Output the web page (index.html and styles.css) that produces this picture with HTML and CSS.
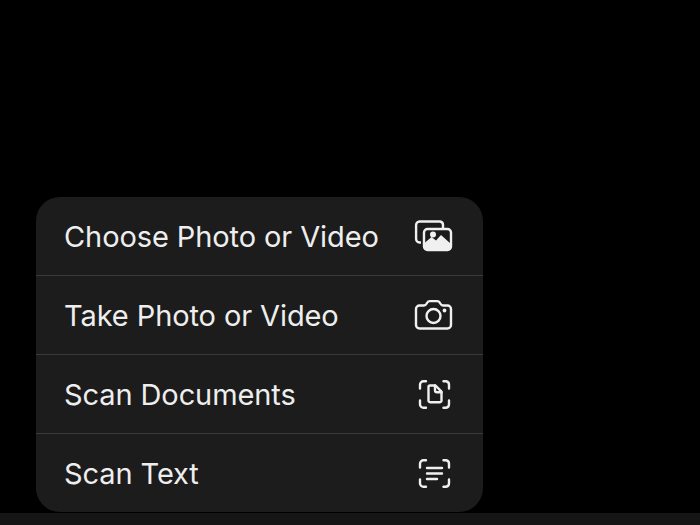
FILE: index.html
```html
<!DOCTYPE html>
<html lang="en">
<head>
<meta charset="utf-8">
<title>Attach menu</title>
<link rel="stylesheet" href="styles.css">
</head>
<body>
<main class="stage">
  <ul class="menu">
    <li class="item"><span class="label">Choose Photo or Video</span>
      <svg class="icon" viewBox="0 0 40 32" width="40" height="32" fill="none" stroke="#f0f0f0" stroke-width="2.4" stroke-linejoin="round">
        <path d="M8 22.500H6.500a3.500 3.500 0 0 1-3.400-3.500V5a3.500 3.500 0 0 1 3.400-3.500h20.500A3.500 3.500 0 0 1 30 5v3"/>
        <rect x="11" y="9" width="27" height="21" rx="3.500"/>
        <path d="M11.500 27v-4l7-6 4.500 3.500 5-5.500 10 9v3.500a2.500 2.500 0 0 1-2.500 2.500h-22a2.500 2.500 0 0 1-2-3z" fill="#f0f0f0" stroke="none"/>
        <circle cx="20" cy="14.500" r="3" fill="#f0f0f0" stroke="none"/>
      </svg>
    </li>
    <li class="item"><span class="label">Take Photo or Video</span>
      <svg class="icon" viewBox="0 0 40 32" width="40" height="32" fill="none" stroke="#f0f0f0" stroke-width="2.4" stroke-linejoin="round">
        <path d="M6.500 6.500h4.500c1.300 0 1.900-.6 2.500-1.700C14.300 3.200 15 2.100 16.500 2.100h8c1.500 0 2.200 1.100 3 2.700.6 1.100 1.200 1.700 2.500 1.700h4.500a3.500 3.500 0 0 1 3.500 3.500v16a3.500 3.500 0 0 1-3.500 3.500H6.500A3.500 3.500 0 0 1 3 26V10a3.500 3.500 0 0 1 3.500-3.500z"/>
        <circle cx="20.500" cy="17" r="7"/>
        <circle cx="31.500" cy="11.500" r="1.900" fill="#f0f0f0" stroke="none"/>
      </svg>
    </li>
    <li class="item"><span class="label">Scan Documents</span>
      <svg class="icon" viewBox="0 0 40 32" width="40" height="32" fill="none" stroke="#f0f0f0" stroke-width="2.4" stroke-linecap="round" stroke-linejoin="round">
        <path d="M13 3.200h-2.500A3.500 3.500 0 0 0 7 6.700v3.800M30.500 3.200H33A3.500 3.500 0 0 1 36 6.700v3.800M13 29.800h-2.500A3.500 3.500 0 0 1 7 26.300v-3.800M30.500 29.800H33a3.500 3.500 0 0 0 3-3.500v-3.800"/>
        <path d="M17 7.500h5.500l6 6.200v9a1.500 1.500 0 0 1-1.500 1.500h-10a1.500 1.500 0 0 1-1.500-1.500V9a1.500 1.500 0 0 1 1.500-1.500z"/>
        <path d="M22 7.500v4.700a2 2 0 0 0 2 2h4.500"/>
      </svg>
    </li>
    <li class="item"><span class="label">Scan Text</span>
      <svg class="icon" viewBox="0 0 40 32" width="40" height="32" fill="none" stroke="#f0f0f0" stroke-width="2.4" stroke-linecap="round" stroke-linejoin="round">
        <path d="M13 3.200h-2.500A3.500 3.500 0 0 0 7 6.700v3.800M30.500 3.200H33A3.500 3.500 0 0 1 36 6.700v3.800M13 29.800h-2.500A3.500 3.500 0 0 1 7 26.300v-3.800M30.500 29.800H33a3.500 3.500 0 0 0 3-3.500v-3.800"/>
        <path d="M14 11h15M14 16.500h15M14 22h10"/>
      </svg>
    </li>
  </ul>
  <div class="strip"></div>
</main>
</body>
</html>
```
FILE: styles.css
```css
html, body {
  margin: 0;
  height: 100%;
  background: #000;
}
.stage {
  height: 525px;
  display: flex;
  flex-direction: column;
  justify-content: flex-end;
  overflow: hidden;
}
.menu {
  list-style: none;
  margin: 0 0 1px 36px;
  padding: 0;
  width: 447px;
  background: #1c1c1c;
  border-radius: 24px;
  overflow: hidden;
  font-family: Inter, "Liberation Sans", sans-serif;
  color: #eeeeee;
}
.item {
  height: 78px;
  padding: 0 30px 0 28px;
  display: flex;
  align-items: center;
  justify-content: space-between;
  border-top: 1px solid #3a3a3a;
}
.item:first-child {
  border-top: 0;
}
.label {
  font-size: 29px;
  letter-spacing: -0.1px;
}
.icon {
  display: block;
  flex: none;
}
.strip {
  height: 12px;
  flex: none;
  background: #151515;
}
```
